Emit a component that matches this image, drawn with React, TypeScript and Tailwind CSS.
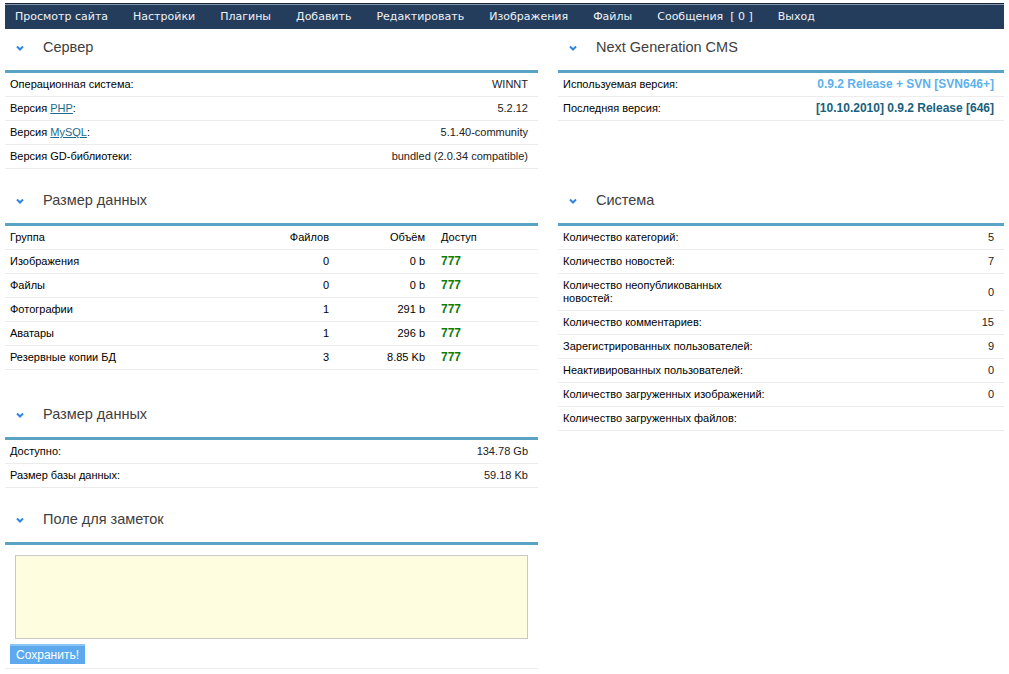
import type { ReactNode } from 'react'

const NAV = ['Просмотр сайта', 'Настройки', 'Плагины', 'Добавить', 'Редактировать', 'Изображения', 'Файлы', 'Сообщения  [ 0 ]', 'Выход']

function Chevron() {
  return (
    <svg width="8" height="6" viewBox="0 0 8 6" className="shrink-0">
      <path d="M1 1.5 L4 4.5 L7 1.5" fill="none" stroke="#2f86e0" strokeWidth="2" />
    </svg>
  )
}

function SectionHead({ title }: { title: string }) {
  return (
    <div className="h-[44px] flex flex-col justify-end">
      <div className="h-[36px] flex items-center pl-[11px] pb-[9px]">
        <Chevron />
        <span className="ml-[19px] text-[14.5px] text-[#404040] font-['Liberation_Sans',sans-serif]">{title}</span>
      </div>
      <div className="h-[3px] bg-[#5aa3c5]" />
    </div>
  )
}

function Row({ label, value, tall }: { label: ReactNode; value?: ReactNode; tall?: boolean }) {
  return (
    <div className={`flex items-center justify-between border-b border-[#ececec] pl-[5px] pr-[10px] py-[5px] leading-[13px] ${tall ? 'min-h-[37px]' : 'min-h-[24px]'}`}>
      <span className="text-black">{label}</span>
      <span className="text-[#222] text-right">{value}</span>
    </div>
  )
}

const L = ({ children }: { children: ReactNode }) => (
  <span className="text-[#1b6a8c] underline">{children}</span>
)

const DATA = [
  ['Изображения', '0', '0 b'],
  ['Файлы', '0', '0 b'],
  ['Фотографии', '1', '291 b'],
  ['Аватары', '1', '296 b'],
  ['Резервные копии БД', '3', '8.85 Kb'],
]

const SYS: [ReactNode, string, boolean?][] = [
  ['Количество категорий:', '5'],
  ['Количество новостей:', '7'],
  [<>Количество неопубликованных<br />новостей:</>, '0', true],
  ['Количество комментариев:', '15'],
  ['Зарегистрированных пользователей:', '9'],
  ['Неактивированных пользователей:', '0'],
  ['Количество загруженных изображений:', '0'],
  ['Количество загруженных файлов:', ''],
]

export default function App() {
  return (
    <div className="min-h-[674px] bg-white px-[5px] pt-[3px] text-[11px] font-['Liberation_Sans',sans-serif]">
      {/* top menu */}
      <div className="h-[26px] bg-[#253d5c] border-t border-[#15233a] flex flex-col">
        <div className="h-px bg-[#8797ab]" />
        <div className="flex-1 flex items-center gap-[25px] pl-[10px] text-[11px] text-[#eef2f7] font-['DejaVu_Sans',sans-serif] whitespace-pre">
          {NAV.map((n) => (
            <span key={n}>{n}</span>
          ))}
        </div>
      </div>

      <div className="grid grid-cols-[533px_446px] gap-x-[20px]">
        {/* row 1 */}
        <div>
          <SectionHead title="Сервер" />
          <Row label="Операционная система:" value="WINNT" />
          <Row label={<>Версия <L>PHP</L>:</>} value="5.2.12" />
          <Row label={<>Версия <L>MySQL</L>:</>} value="5.1.40-community" />
          <Row label="Версия GD-библиотеки:" value="bundled (2.0.34 compatible)" />
        </div>
        <div>
          <SectionHead title="Next Generation CMS" />
          <Row label="Используемая версия:" value={<span className="font-bold text-[#5db1ec] text-[12px]">0.9.2 Release + SVN [SVN646+]</span>} />
          <Row label="Последняя версия:" value={<span className="font-bold text-[#17607e] text-[12px]">[10.10.2010] 0.9.2 Release [646]</span>} />
        </div>

        {/* row 2 */}
        <div className="mt-[13px]">
          <SectionHead title="Размер данных" />
          <div className="grid grid-cols-[250px_69px_96px_1fr] items-center pl-[5px] min-h-[24px] border-b border-[#ececec] leading-[13px]">
            <span>Группа</span>
            <span className="text-right">Файлов</span>
            <span className="text-right">Объём</span>
            <span className="pl-[16px]">Доступ</span>
          </div>
          {DATA.map(([g, f, v]) => (
            <div key={g} className="grid grid-cols-[250px_69px_96px_1fr] items-center pl-[5px] min-h-[24px] border-b border-[#ececec] leading-[13px]">
              <span>{g}</span>
              <span className="text-right">{f}</span>
              <span className="text-right">{v}</span>
              <span className="pl-[16px] font-bold text-[#0a7d0a] text-[12px]">777</span>
            </div>
          ))}

          <div className="mt-[26px]">
            <SectionHead title="Размер данных" />
            <Row label="Доступно:" value="134.78 Gb" />
            <Row label="Размер базы данных:" value="59.18 Kb" />
          </div>

          <div className="mt-[13px]">
            <SectionHead title="Поле для заметок" />
            <div className="border-b border-[#ececec] pb-[4px]">
              <div className="px-[10px] pt-[10px]">
                <textarea className="block w-full h-[84px] bg-[#fefde0] border border-[#c9c9c9] resize-none outline-none" />
              </div>
              <button className="mt-[5px] ml-[5px] h-[20px] w-[75px] bg-[#5ca9ee] border-t-2 border-[#8cc4f4] text-white text-[12px] leading-[16px] text-center font-['Liberation_Sans',sans-serif]">
                Сохранить!
              </button>
            </div>
          </div>
        </div>
        <div className="mt-[13px]">
          <SectionHead title="Система" />
          {SYS.map(([l, v, t], i) => (
            <Row key={i} label={l} value={v} tall={t} />
          ))}
        </div>
      </div>
    </div>
  )
}
